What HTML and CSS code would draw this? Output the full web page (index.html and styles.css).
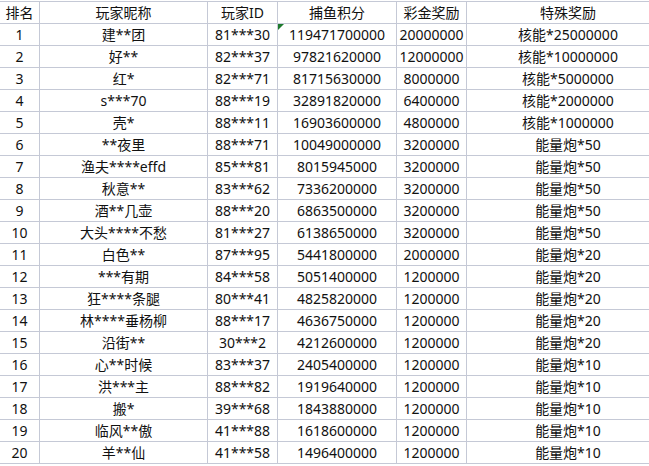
FILE: index.html
```html
<!DOCTYPE html>
<html lang="zh">
<head>
<meta charset="utf-8">
<link rel="stylesheet" href="styles.css">
</head>
<body>
<div class="sheet">
<table class="grid">
<colgroup>
<col class="c1"><col class="c2"><col class="c3"><col class="c4"><col class="c5"><col class="c6">
</colgroup>
<thead>
<tr><th>排名</th><th>玩家昵称</th><th>玩家ID</th><th>捕鱼积分</th><th>彩金奖励</th><th>特殊奖励</th></tr>
</thead>
<tbody>
<tr><td>1</td><td>建**团</td><td>81***30</td><td class="flag">119471700000</td><td>20000000</td><td>核能*25000000</td></tr>
<tr><td>2</td><td>好**</td><td>82***37</td><td>97821620000</td><td>12000000</td><td>核能*10000000</td></tr>
<tr><td>3</td><td>红*</td><td>82***71</td><td>81715630000</td><td>8000000</td><td>核能*5000000</td></tr>
<tr><td>4</td><td>s***70</td><td>88***19</td><td>32891820000</td><td>6400000</td><td>核能*2000000</td></tr>
<tr><td>5</td><td>壳*</td><td>88***11</td><td>16903600000</td><td>4800000</td><td>核能*1000000</td></tr>
<tr><td>6</td><td>**夜里</td><td>88***71</td><td>10049000000</td><td>3200000</td><td>能量炮*50</td></tr>
<tr><td>7</td><td>渔夫****effd</td><td>85***81</td><td>8015945000</td><td>3200000</td><td>能量炮*50</td></tr>
<tr><td>8</td><td>秋意**</td><td>83***62</td><td>7336200000</td><td>3200000</td><td>能量炮*50</td></tr>
<tr><td>9</td><td>酒**几壶</td><td>88***20</td><td>6863500000</td><td>3200000</td><td>能量炮*50</td></tr>
<tr><td>10</td><td>大头****不愁</td><td>81***27</td><td>6138650000</td><td>3200000</td><td>能量炮*50</td></tr>
<tr><td>11</td><td>白色**</td><td>87***95</td><td>5441800000</td><td>2000000</td><td>能量炮*20</td></tr>
<tr><td>12</td><td>***有期</td><td>84***58</td><td>5051400000</td><td>1200000</td><td>能量炮*20</td></tr>
<tr><td>13</td><td>狂****条腿</td><td>80***41</td><td>4825820000</td><td>1200000</td><td>能量炮*20</td></tr>
<tr><td>14</td><td>林****垂杨柳</td><td>88***17</td><td>4636750000</td><td>1200000</td><td>能量炮*20</td></tr>
<tr><td>15</td><td>沿街**</td><td>30***2</td><td>4212600000</td><td>1200000</td><td>能量炮*20</td></tr>
<tr><td>16</td><td>心**时候</td><td>83***37</td><td>2405400000</td><td>1200000</td><td>能量炮*10</td></tr>
<tr><td>17</td><td>洪***主</td><td>88***82</td><td>1919640000</td><td>1200000</td><td>能量炮*10</td></tr>
<tr><td>18</td><td>搬*</td><td>39***68</td><td>1843880000</td><td>1200000</td><td>能量炮*10</td></tr>
<tr><td>19</td><td>临风**傲</td><td>41***88</td><td>1618600000</td><td>1200000</td><td>能量炮*10</td></tr>
<tr><td>20</td><td>羊**仙</td><td>41***58</td><td>1496400000</td><td>1200000</td><td>能量炮*10</td></tr>
</tbody>
</table>
</div>
</body>
</html>
```

FILE: styles.css
```css
html, body {
  margin: 0;
  padding: 0;
  background: #ffffff;
  overflow: hidden;
}
.sheet {
  padding-top: 1px;
  margin-left: -1px;
}
.grid {
  border-collapse: collapse;
  table-layout: fixed;
  width: 670px;
  font-family: "Noto Sans", "Noto Sans CJK SC", sans-serif;
  font-size: 14px;
  color: #111111;
}
.c1 { width: 40px; }
.c2 { width: 168px; }
.c3 { width: 70px; }
.c4 { width: 119px; }
.c5 { width: 70px; }
.c6 { width: 203px; }
.grid th, .grid td {
  border: 1px solid #c5c9d6;
  height: 21px;
  padding: 0;
  text-align: center;
  vertical-align: middle;
  font-weight: normal;
  white-space: nowrap;
  line-height: 21px;
}
.flag {
  position: relative;
}
.flag::before {
  content: "";
  position: absolute;
  left: 0;
  top: 0;
  width: 0;
  height: 0;
  border-top: 6px solid #1e7a2e;
  border-right: 6px solid transparent;
}
```
